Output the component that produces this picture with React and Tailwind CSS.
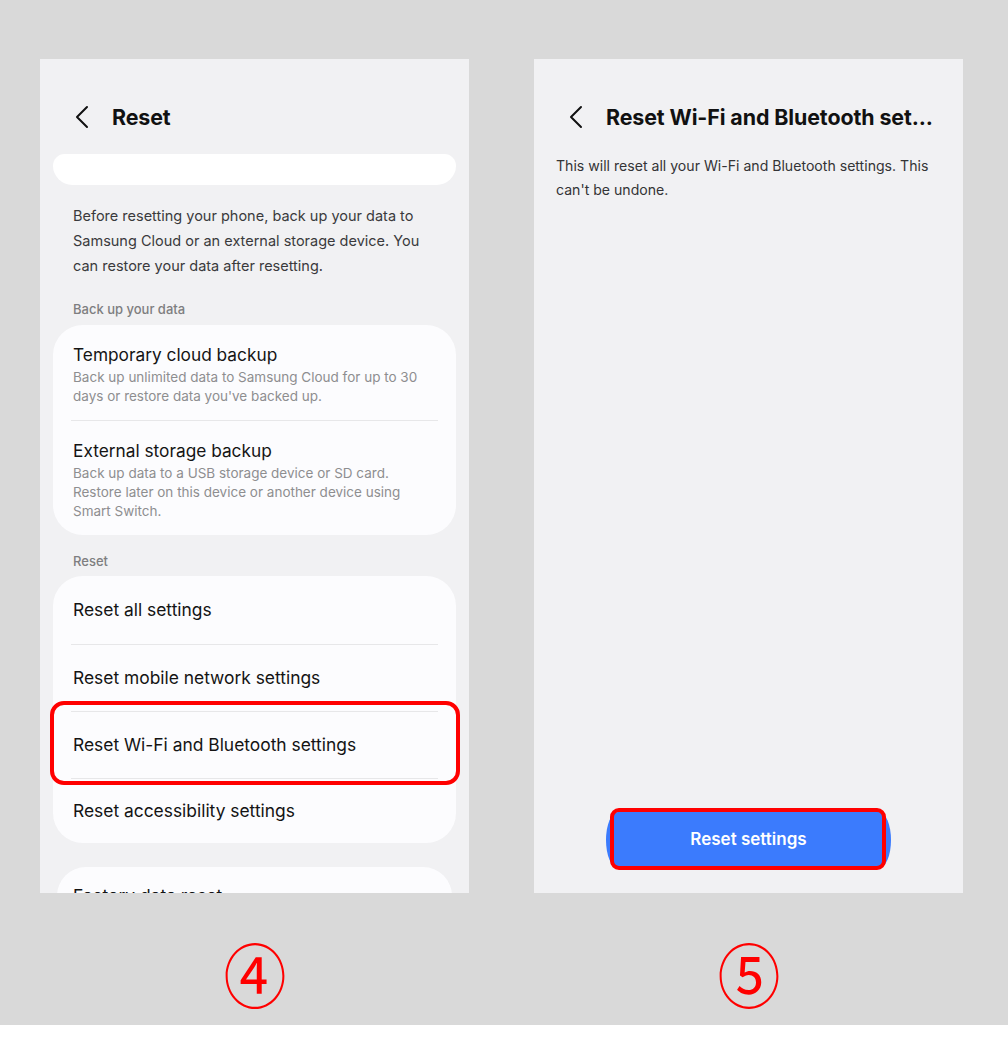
import React from 'react';

const BackChevron = () => (
  <svg width="14" height="24" viewBox="0 0 14 24" fill="none" className="shrink-0">
    <polyline points="12,2 2,12 12,22" stroke="#111" strokeWidth="2" strokeLinecap="round" strokeLinejoin="round" />
  </svg>
);

const Header = ({ title }) => (
  <div className="h-[94px] pt-[44px] pl-[35px]">
    <div className="flex items-center h-[28px]">
      <BackChevron />
      <span className="ml-[23px] text-[21.4px] font-bold text-[#111] whitespace-nowrap tracking-[-0.1px]">{title}</span>
    </div>
  </div>
);

const Divider = () => <div className="mx-[18px] h-px bg-[#e7e7e9]" />;

const BackupRow = ({ title, lines }) => (
  <div className="px-[20px] pt-[19px] pb-[14px]">
    <div className="text-[17.3px] leading-[22px] text-[#141414]">{title}</div>
    <div className="mt-[2px] text-[13.5px] leading-[19px] text-[#8e8e90] whitespace-nowrap">
      {lines.map((l) => (
        <div key={l}>{l}</div>
      ))}
    </div>
  </div>
);

const ResetRow = ({ label, h = 'h-[66px]' }) => (
  <div className={`${h} flex items-center px-[20px] text-[17.4px] text-[#141414]`}>{label}</div>
);

const ResetPanel = () => (
  <div className="relative w-[429px] h-[834px] shrink-0 bg-[#f1f1f3] overflow-hidden">
    <Header title="Reset" />
    <div className="mt-[1px] mx-[13px] h-[31px] bg-white rounded-t-[18px] rounded-b-[30px]" />
    <p className="mt-[18px] px-[33px] text-[14.5px] leading-[25px] text-[#3a3a3c] whitespace-nowrap">
      Before resetting your phone, back up your data to<br />
      Samsung Cloud or an external storage device. You<br />
      can restore your data after resetting.
    </p>
    <div className="mt-[22px] px-[33px] text-[13px] leading-[18px] font-medium text-[#7e7e80]">Back up your data</div>
    <div className="mt-[7px] mx-[13px] bg-[#fcfcfe] rounded-[30px]">
      <BackupRow
        title="Temporary cloud backup"
        lines={['Back up unlimited data to Samsung Cloud for up to 30', "days or restore data you've backed up."]}
      />
      <Divider />
      <BackupRow
        title="External storage backup"
        lines={['Back up data to a USB storage device or SD card.', 'Restore later on this device or another device using', 'Smart Switch.']}
      />
    </div>
    <div className="mt-[17px] px-[33px] text-[13px] leading-[18px] font-medium text-[#7e7e80]">Reset</div>
    <div className="mt-[6px] mx-[13px] bg-[#fcfcfe] rounded-[30px] pt-[1px]">
      <ResetRow label="Reset all settings" h="h-[67px]" />
      <Divider />
      <ResetRow label="Reset mobile network settings" />
      <Divider />
      <ResetRow label="Reset Wi-Fi and Bluetooth settings" />
      <Divider />
      <ResetRow label="Reset accessibility settings" h="h-[64px]" />
    </div>
    <div className="mt-[24px] mx-[17px] bg-[#fcfcfe] rounded-[30px]">
      <div className="h-[58px] flex items-center px-[16px] text-[17.4px] text-[#141414]">Factory data reset</div>
    </div>
    <div className="absolute left-[10px] top-[642px] w-[410px] h-[84px] border-[4px] border-[#ff0000] rounded-[14px]" />
  </div>
);

const WifiPanel = () => (
  <div className="w-[429px] h-[834px] shrink-0 bg-[#f1f1f3] overflow-hidden flex flex-col">
    <Header title="Reset Wi-Fi and Bluetooth set..." />
    <p className="mt-[1px] px-[22px] text-[14.1px] leading-[24px] text-[#343436] whitespace-nowrap">
      This will reset all your Wi-Fi and Bluetooth settings. This<br />
      can't be undone.
    </p>
    <div className="flex-1" />
    <div className="flex justify-center pb-[25px]">
      <div className="relative">
        <button className="w-[285px] h-[56px] bg-[#3b7bfd] rounded-[12px_/_28px] text-white text-[17px] font-semibold">
          Reset settings
        </button>
        <div className="absolute left-[4px] right-[5px] top-[-4px] bottom-[-2px] border-[4px] border-[#ff0000] rounded-[9px]" />
      </div>
    </div>
  </div>
);

const StepNumber = ({ glyph }) => (
  <div className="w-[429px] flex justify-center">
    <span className="text-[#ff0000] text-[70px] leading-[80px] scale-x-[0.9] inline-block [font-family:'Noto_Sans_CJK_JP',sans-serif]">
      {glyph}
    </span>
  </div>
);

export default function App() {
  return (
    <div className="w-[1008px] min-h-[1062px] bg-white [font-family:Inter,'Noto_Sans',sans-serif]">
      <div className="h-[1025px] bg-[#d9d9d9] pt-[59px] pl-[40px]">
        <div className="flex gap-[65px]">
          <ResetPanel />
          <WifiPanel />
        </div>
        <div className="flex gap-[65px] mt-[40px]">
          <StepNumber glyph="④" />
          <StepNumber glyph="⑤" />
        </div>
      </div>
    </div>
  );
}
